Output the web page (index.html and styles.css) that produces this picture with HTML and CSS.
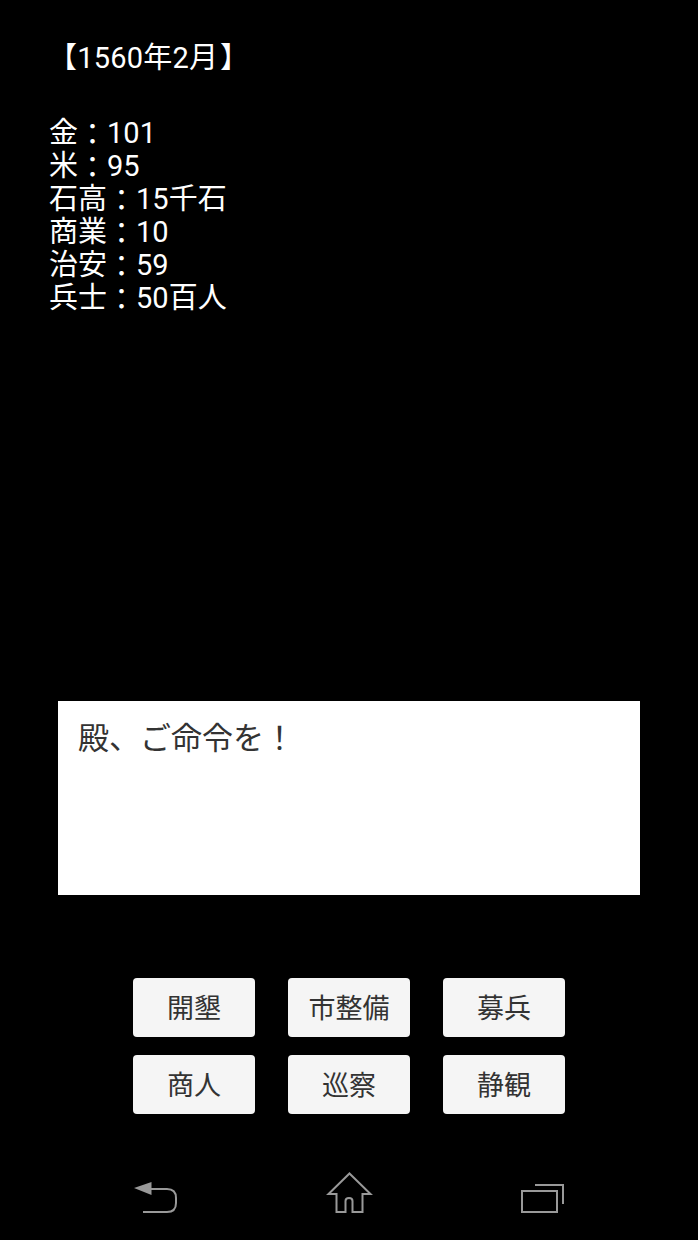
FILE: index.html
```html
<!DOCTYPE html>
<html lang="ja">
<head>
  <meta charset="UTF-8">
  <meta name="viewport" content="width=device-width, initial-scale=1.0">
  <title>殿、ご命令を！</title>
  <link rel="stylesheet" href="styles.css">
</head>
<body>

  <div class="status">
    <div class="date">【1560年2月<span class="date-end">】</span></div>
    <div class="stats">
      <div>金<span class="sep">：</span>101</div>
      <div>米<span class="sep">：</span>95</div>
      <div>石高<span class="sep">：</span>15千石</div>
      <div>商業<span class="sep">：</span>10</div>
      <div>治安<span class="sep">：</span>59</div>
      <div>兵士<span class="sep">：</span>50百人</div>
    </div>
  </div>

  <div class="message">殿、ご命令を！</div>

  <div class="commands">
    <button class="btn">開墾</button>
    <button class="btn">市整備</button>
    <button class="btn">募兵</button>
    <button class="btn">商人</button>
    <button class="btn">巡察</button>
    <button class="btn">静観</button>
  </div>

  <div class="navbar">
    <!-- back -->
    <svg class="nav-icon" width="46" height="34" viewBox="0 0 46 34">
      <path d="M18 8H34Q43 8 43 17V22Q43 31 34 31H10" fill="none" stroke="#999" stroke-width="2"/>
      <path d="M1 7L18.500 1V14Z" fill="#999"/>
    </svg>
    <!-- home -->
    <svg class="nav-icon" width="48" height="44" viewBox="0.5 0 48 44">
      <path d="M24 2.500L45 23H37V41H27V30Q27 27 23.500 27Q20 27 20 30V41H11V23H3Z" fill="none" stroke="#999" stroke-width="2"/>
    </svg>
    <!-- recents -->
    <svg class="nav-icon" width="46" height="32" viewBox="0 0 46 32">
      <path d="M15 2H43V21" fill="none" stroke="#999" stroke-width="2"/>
      <rect x="2" y="8" width="35" height="21" fill="none" stroke="#999" stroke-width="2"/>
    </svg>
  </div>

</body>
</html>
```

FILE: styles.css
```css
* {
  margin: 0;
  padding: 0;
  box-sizing: border-box;
}

body {
  font-family: Roboto, "Noto Sans CJK JP", sans-serif;
  background-color: #000;
  width: 698px;
  height: 1240px;
  display: flex;
  flex-direction: column;
  overflow: hidden;
}

.status {
  height: 701px;
  padding: 42px 0 0 49px;
  color: #fff;
  font-size: 29px;
  line-height: 33px;
}

.date {
  margin-bottom: 42px;
  margin-left: -1px;
  letter-spacing: 0.2px;
}

.date-end {
  margin-left: 2px;
}

.sep {
  line-height: 0;
  vertical-align: -2px;
}

.message {
  width: 582px;
  height: 194px;
  margin-left: 58px;
  padding: 19px 20px;
  background-color: #fff;
  color: #333;
  font-size: 31px;
  line-height: 37px;
}

.commands {
  display: grid;
  grid-template-columns: repeat(3, 122px);
  grid-auto-rows: 59px;
  gap: 18px 33px;
  justify-content: center;
  margin-top: 83px;
}

.btn {
  padding-bottom: 3px;
  background-color: #f5f5f5;
  color: #333;
  border: none;
  border-radius: 4px;
  font-family: inherit;
  font-size: 27px;
}

.navbar {
  display: flex;
  justify-content: space-between;
  align-items: flex-end;
  padding: 0 132px 25px 133px;
  margin-top: auto;
}
```
